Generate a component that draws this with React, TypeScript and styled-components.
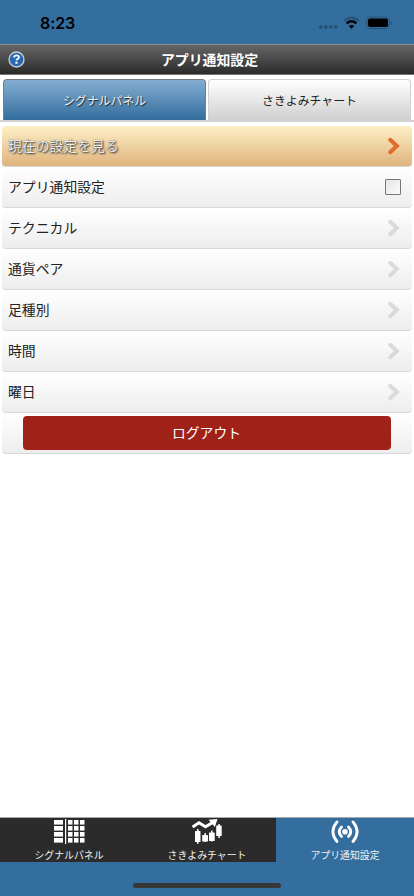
import React from "react";
import styled, { createGlobalStyle, css } from "styled-components";

const GlobalStyle = createGlobalStyle`
  * { box-sizing: border-box; }
  html, body { margin: 0; background: #fff; }
  body { font-family: "Noto Sans CJK JP", sans-serif; overflow: hidden; }
`;

const Screen = styled.div`
  width: 414px;
  height: 896px;
  display: flex;
  flex-direction: column;
  background: #fff;
  color: #222;
`;

const StatusBar = styled.div`
  height: 44px;
  flex: none;
  display: flex;
  justify-content: space-between;
  background: #336e9f;
  padding: 0 22px 0 40px;
`;

const Clock = styled.div`
  font: 600 16px/20px Inter, sans-serif;
  color: #000;
  padding-top: 13px;
  letter-spacing: -0.1px;
`;

const StatusIcons = styled.svg`
  width: 74px;
  height: 16px;
  margin-top: 15px;
`;

const Header = styled.header`
  height: 31px;
  flex: none;
  display: grid;
  grid-template-columns: 30px 1fr 26px;
  align-items: center;
  padding-left: 8px;
  padding-right: 7px;
  background: linear-gradient(#666, #2b2b2b);
  border-top: 1px solid #8d8d8d;
  border-bottom: 1px solid #777;
`;

const Title = styled.h1`
  margin: 0;
  padding-bottom: 2px;
  text-align: center;
  font-size: 13.9px;
  line-height: 20px;
  font-weight: 700;
  color: #fff;
`;

const Tabs = styled.nav`
  height: 47px;
  flex: none;
  display: grid;
  grid-template-columns: 203px 203px;
  column-gap: 2px;
  padding: 4px 3px 0;
  border-bottom: 2px solid #d2d2d2;
`;

const Tab = styled.div<{ $active?: boolean }>`
  border: 1px solid #d0d0d0;
  border-bottom: 0;
  border-radius: 4px 4px 0 0;
  background: linear-gradient(#fff, #cfcfcf);
  font-size: 11.9px;
  line-height: 40px;
  text-align: center;
  color: #222;
  ${(p) =>
    p.$active &&
    css`
      border-color: #727c84;
      background: linear-gradient(#84aed1, #326d9d);
      color: #eee;
      text-shadow: 1px 1px 1px #222;
    `}
`;

const List = styled.main`
  flex: 1;
  padding: 4px 2px 0;
`;

const Row = styled.div<{ $highlight?: boolean }>`
  height: 41px;
  display: flex;
  align-items: center;
  justify-content: space-between;
  padding: 0 12px 0 6px;
  border-bottom: 1px solid #d8d8d8;
  border-radius: 4px;
  background: linear-gradient(#fff, #ededed);
  font-size: 13.85px;
  line-height: 20px;
  ${(p) =>
    p.$highlight &&
    css`
      background: linear-gradient(#fdf0c6, #dfb37c);
      color: #eee;
      text-shadow: 1px 1px 2px #222, 0 0 1px #555;
    `}
`;

const RowLabel = styled.span`
  padding-bottom: 2px;
`;

const ChevronIcon = styled.svg`
  width: 13px;
  height: 18px;
`;

const Checkbox = styled.span`
  width: 16px;
  height: 16px;
  margin-right: -1px;
  border: 1px solid #777;
  border-radius: 1px;
  background: linear-gradient(135deg, #e5e5e5, #fafafa);
`;

const LogoutRow = styled(Row)`
  padding: 0 21px;
`;

const LogoutButton = styled.button`
  width: 368px;
  height: 34px;
  border: 0;
  border-radius: 4px;
  background: #a02118;
  color: #fff;
  font: 13.8px/20px "Noto Sans CJK JP", sans-serif;
  padding: 0 1px 2px 0;
`;

const BottomArea = styled.footer`
  height: 79px;
  flex: none;
  display: grid;
  grid-template-columns: repeat(3, 1fr);
  grid-template-rows: 44px 34px;
  background: #336e9f;
  border-top: 1px solid #aaa;
`;

const NavItem = styled.div<{ $active?: boolean }>`
  display: flex;
  flex-direction: column;
  align-items: center;
  background: ${(p) => (p.$active ? "#336e9f" : "#2b2b2b")};
  color: #f3f3f3;
  font-size: 9.9px;
  line-height: 14px;
`;

const NavIcon = styled.svg`
  width: 32px;
  height: 26px;
  flex: none;
  margin-bottom: 4px;
`;

const HomeIndicator = styled.div`
  grid-column: 1 / -1;
  justify-self: center;
  width: 148px;
  height: 5px;
  margin-top: 21px;
  border-radius: 3px;
  background: #373737;
`;

const HelpIcon = styled.svg`
  width: 17px;
  height: 17px;
`;

const Chevron = ({ color = "#dadada" }: { color?: string }) => (
  <ChevronIcon viewBox="0 0 13 18">
    <path d="M3.2 2.8 9.8 9 3.2 15.2" fill="none" stroke={color} strokeWidth="4" strokeLinecap="round" />
  </ChevronIcon>
);

const items = ["テクニカル", "通貨ペア", "足種別", "時間", "曜日"];
const gridRows = [0, 6, 12, 18];
const gridColumns = [14, 20, 26];

export default function App() {
  return (
    <>
      <GlobalStyle />
      <Screen>
        <StatusBar>
          <Clock>8:23</Clock>
          <StatusIcons viewBox="0 0 74 16">
            <g fill="#255478">
              {[2.8, 7.8, 12.8, 17.8].map((x) => <circle key={x} cx={x} cy="12" r="1.9" />)}
            </g>
            <path d="M26.3 6Q33.5-.8 40.7 6" fill="none" stroke="#255478" strokeWidth="2.2" />
            <path d="M28.6 8.4Q33.5 4.2 38.4 8.4" fill="none" stroke="#000" strokeWidth="2.3" />
            <path d="M30.8 11Q33.5 8.9 36.2 11L33.5 13.7Z" fill="#000" />
            <rect x="48.5" y="2" width="23" height="11.5" rx="3.5" fill="none" stroke="#255478" />
            <rect x="50" y="3.5" width="20" height="8.5" rx="2" fill="#000" />
            <path d="M73 6v4q1-.5 1-2t-1-2" fill="#255478" />
          </StatusIcons>
        </StatusBar>
        <Header>
          <HelpIcon viewBox="0 0 17 17">
            <circle cx="8.5" cy="8.5" r="7.5" fill="#2869b2" stroke="#c9cdd3" strokeWidth="1.3" />
            <path d="M6.1 6.5Q6.2 4.4 8.5 4.4q2.4 0 2.4 1.8 0 1.1-1.3 1.8-1.1.6-1.1 1.5" fill="none" stroke="#fff" strokeWidth="1.9" />
            <rect x="7.4" y="10.7" width="2.1" height="2" rx=".5" fill="#fff" />
          </HelpIcon>
          <Title>アプリ通知設定</Title>
        </Header>
        <Tabs>
          <Tab $active>シグナルパネル</Tab>
          <Tab>さきよみチャート</Tab>
        </Tabs>
        <List>
          <Row $highlight><RowLabel>現在の設定を見る</RowLabel><Chevron color="#e46b2c" /></Row>
          <Row><RowLabel>アプリ通知設定</RowLabel><Checkbox /></Row>
          {items.map((item) => <Row key={item}><RowLabel>{item}</RowLabel><Chevron /></Row>)}
          <LogoutRow><LogoutButton>ログアウト</LogoutButton></LogoutRow>
        </List>
        <BottomArea>
          <NavItem>
            <NavIcon viewBox="0 0 32 26">
              <g fill="#fff">
                {gridRows.map((y) => (
                  <React.Fragment key={y}>
                    <rect x="1" y={y + 2} width="9" height="4.6" />
                    {gridColumns.map((x) => <rect key={x} x={x + 1} y={y + 2} width="4.5" height="4.6" />)}
                  </React.Fragment>
                ))}
                <rect x="12" y="1" width="1.2" height="25" />
              </g>
            </NavIcon>
            シグナルパネル
          </NavItem>
          <NavItem>
            <NavIcon viewBox="0 0 32 26">
              <path d="M1.6 9 8 4.8 14.5 8.8 23 3.7" fill="none" stroke="#fff" strokeWidth="3" />
              <path d="m17.5 1.8 9-.8-2.6 8Z" fill="#fff" />
              <g fill="#fff">
                <rect x="4" y="13" width="5.5" height="11" rx=".5" />
                <rect x="11.2" y="17" width="5.8" height="6.5" rx=".5" />
                <rect x="18" y="14.5" width="5.7" height="8.5" rx=".5" />
                <rect x="25.2" y="7.5" width="5.5" height="10.5" rx=".5" />
              </g>
              <path d="M6.8 11v14.8M14.2 15v9M20.8 12.5v11M28 6v14" stroke="#fff" strokeWidth="1.5" />
            </NavIcon>
            さきよみチャート
          </NavItem>
          <NavItem $active>
            <NavIcon viewBox="0 0 32 26">
              <circle cx="16" cy="13.7" r="2.8" fill="#fff" />
              <path d="M12.5 9Q8 13.7 12.5 18.4M19.5 9Q24 13.7 19.5 18.4M8 3.9Q-.2 13.7 8 23.5M24 3.9Q32.2 13.7 24 23.5" fill="none" stroke="#fff" strokeWidth="2.8" strokeLinecap="round" />
            </NavIcon>
            アプリ通知設定
          </NavItem>
          <HomeIndicator />
        </BottomArea>
      </Screen>
    </>
  );
}
